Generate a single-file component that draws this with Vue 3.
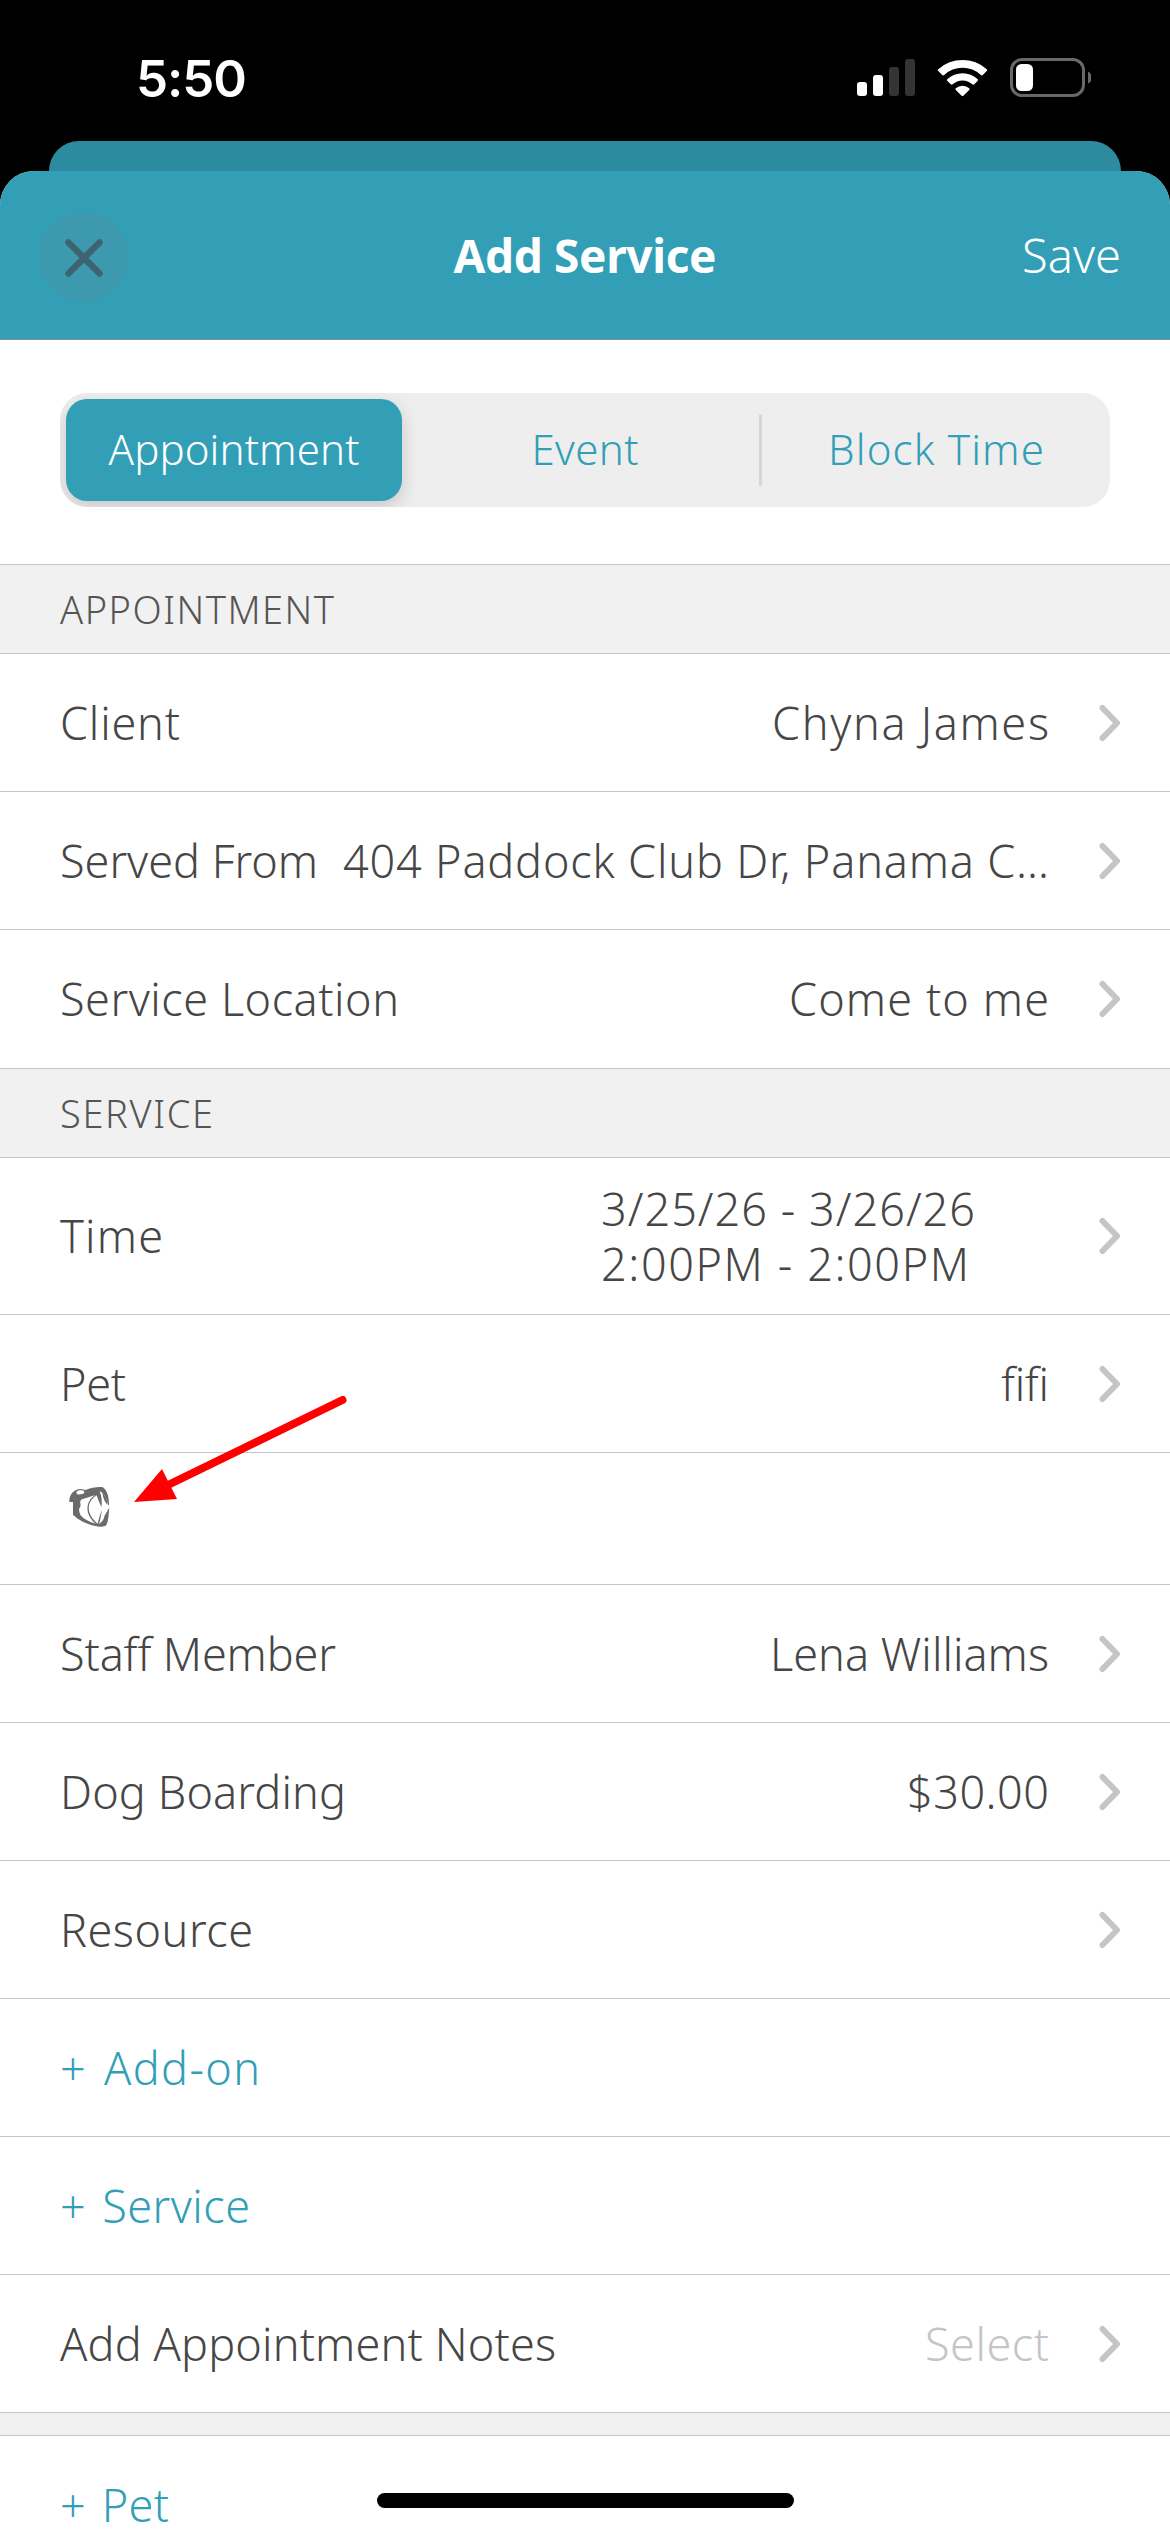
<script setup>
// Spreads the letters of a label so that it takes up the given width.
const vFit = {
  mounted(el, { value }) {
    if (!value) return
    const gaps = Array.from(el.textContent).length - 1
    const spacing = (value - el.getBoundingClientRect().width) / gaps
    el.style.letterSpacing = `${spacing}px`
    el.style.marginRight = `${-spacing}px`
  },
}

const tabs = [
  { text: 'Appointment', w: 251, active: true },
  { text: 'Event', w: 107 },
  { text: 'Block Time', w: 216, divided: true },
]

const sections = [
  {
    title: 'APPOINTMENT',
    w: 274,
    rows: [
      { label: 'Client', lw: 120, value: 'Chyna James', vw: 277 },
      { label: 'Served From', lw: 258, value: '404 Paddock Club Dr, Panama C…', vw: 706 },
      { label: 'Service Location', lw: 339, value: 'Come to me', vw: 260, last: true },
    ],
  },
  {
    title: 'SERVICE',
    w: 153,
    rows: [
      {
        label: 'Time',
        lw: 103,
        lines: [
          { text: '3/25/26 - 3/26/26', w: 374 },
          { text: '2:00PM - 2:00PM', w: 368 },
        ],
      },
      { label: 'Pet', lw: 66, value: 'fifi', vw: 48 },
      { icon: true },
      { label: 'Staff Member', lw: 276, value: 'Lena Williams', vw: 279 },
      { label: 'Dog Boarding', lw: 286, value: '$30.00', vw: 142 },
      { label: 'Resource', lw: 193, value: '' },
      { action: '+ Add-on', lw: 200 },
      { action: '+ Service', lw: 190 },
      { label: 'Add Appointment Notes', lw: 496, value: 'Select', vw: 124, placeholder: true },
    ],
  },
]
</script>

<template>
  <div class="screen">
    <header class="status">
      <span v-fit="111" class="clock">5:50</span>
      <svg class="status-icons" width="240" height="44" viewBox="0 0 240 44">
        <g fill="#fff">
          <rect x="6" y="27" width="10" height="14" rx="3" />
          <rect x="22" y="20" width="10" height="21" rx="3" />
        </g>
        <g fill="#343434">
          <rect x="38" y="12" width="10" height="29" rx="3" />
          <rect x="54" y="4" width="10" height="37" rx="3" />
        </g>
        <g fill="#fff">
          <path d="M87.300 14.300a36 36 0 0 1 48.400 0q.9.900 0 1.800l-3.900 3.900q-1 .9-2 0a26.600 26.600 0 0 0-36.600 0q-1 .9-2 0l-3.900-3.900q-.9-.9 0-1.800z" />
          <path d="M96.200 24.300a22.500 22.500 0 0 1 30.600 0q.7.8 0 1.500l-3.500 3.500q-1 .9-2 0a14.300 14.300 0 0 0-19.600 0q-1 .9-2 0l-3.500-3.500q-.7-.7 0-1.500z" />
          <path d="M104.800 33.300a10 10 0 0 1 13.400 0q.9.8 0 1.700l-5.800 5.700q-.9.9-1.800 0l-5.800-5.700q-.9-.9 0-1.700z" />
        </g>
        <rect x="160.500" y="4.500" width="72" height="36" rx="10.500" fill="none" stroke="#686868" stroke-width="3" />
        <rect x="165" y="9" width="17" height="27" rx="5.500" fill="#fff" />
        <path d="M237 16.500c5 2 5 10 0 12z" fill="#686868" />
      </svg>
    </header>

    <div class="back-sheet"></div>

    <main class="sheet">
      <nav class="navbar">
        <button class="close">
          <svg width="90" height="90" viewBox="0 0 90 90">
            <path d="M29.500 30.500l31 31M60.500 30.500l-31 31" fill="none" stroke="#3d6470" stroke-width="6.500" stroke-linecap="round" />
          </svg>
        </button>
        <h1><span v-fit="263">Add Service</span></h1>
        <div class="save"><span v-fit="99">Save</span></div>
      </nav>

      <div class="tabs-wrap">
        <div class="tabs">
          <div v-for="t in tabs" :key="t.text" class="tab" :class="{ active: t.active, divided: t.divided }">
            <span v-fit="t.w">{{ t.text }}</span>
          </div>
        </div>
      </div>

      <section v-for="s in sections" :key="s.title">
        <h2><span v-fit="s.w">{{ s.title }}</span></h2>
        <div
          v-for="(r, i) in s.rows"
          :key="i"
          class="row"
          :class="{ last: r.last, tall: r.lines, 'icon-row': r.icon }"
        >
          <svg v-if="r.icon" class="dog" width="42" height="42" viewBox="56 318 126 126">
            <path
              fill="#6b6b6b"
              d="M60 366C59 345 72 328 95 327L108 330C124 322 145 320 158 321C172 326 180 350 179 378L180 382C178 408 176 433 169 437C160 441 148 441 138 438C112 433 86 419 71 404V366Z"
            />
            <ellipse cx="93" cy="337" rx="12" ry="6" fill="#fff" transform="rotate(-8 93 337)" />
            <path
              fill="#fff"
              d="M95 359C108 355 122 350 138 345C106 365 107 404 139 431C120 425 104 417 95 407C86 393 88 371 95 359Z"
            />
            <path fill="#fff" d="M142 346C110 366 110 402 145 431C149 415 153 402 158 390C156 403 153 419 149 433C163 423 172 404 176 388L181 386V376L176 374C173 356 164 339 151 334C157 350 159 366 156 382C152 371 147 362 142 346Z" />
            <path fill="#6b6b6b" d="M92 362Q96 373 91 388Q86 373 92 362ZM159 338Q172 350 175 374Q163 365 159 338ZM161 429Q170 414 174 394Q164 404 161 429Z" />
          </svg>
          <span v-else-if="r.action" v-fit="r.lw" class="action">{{ r.action }}</span>
          <template v-else>
            <span v-fit="r.lw" class="label">{{ r.label }}</span>
            <div v-if="r.lines" class="times">
              <div v-for="l in r.lines" :key="l.text"><span v-fit="l.w">{{ l.text }}</span></div>
            </div>
            <div v-else class="value" :class="{ placeholder: r.placeholder }">
              <span v-fit="r.vw">{{ r.value }}</span>
            </div>
            <svg class="chevron" width="22" height="38" viewBox="0 0 22 38">
              <path d="M3.500 4L18 19L3.500 34" fill="none" stroke="#c5c5c7" stroke-width="6" stroke-linecap="round" stroke-linejoin="round" />
            </svg>
          </template>
        </div>
      </section>

      <div class="gap"></div>
      <div class="row"><span v-fit="109" class="action">+ Pet</span></div>
    </main>

    <svg class="arrow" width="220" height="112" viewBox="130 1395 220 112">
      <path d="M342.500 1400L166 1486" stroke="#f00" stroke-width="8" stroke-linecap="round" />
      <path d="M134 1502L162 1469L177 1499Z" fill="#f00" />
    </svg>
    <div class="home-indicator"></div>
  </div>
</template>

<style>
body {
  background: #000;
}
</style>

<style scoped>
.screen {
  position: relative;
  width: 1170px;
  height: 2532px;
  overflow: hidden;
  background: #000;
  color: #464646;
  font-family: 'Noto Sans', 'Open Sans', sans-serif;
  font-size: 45px;
  font-weight: 300;
}
.screen * {
  box-sizing: border-box;
}
.screen span {
  display: inline-block;
  flex: none;
  white-space: nowrap;
}
.status {
  display: flex;
  justify-content: space-between;
  height: 141px;
  padding: 0 79px 0 136px;
}
.clock {
  margin-top: 48px;
  height: 62px;
  color: #fff;
  font: 600 51px/62px Inter, sans-serif;
}
.status-icons {
  margin-top: 55px;
}
.back-sheet {
  height: 66px;
  margin: 0 49px -36px;
  border-radius: 30px 30px 0 0;
  background: #2c8b9f;
}
.sheet {
  position: relative;
  height: 2361px;
  overflow: hidden;
  border-radius: 34px 34px 0 0;
  background: #fff;
}
.navbar {
  display: grid;
  grid-template-columns: 1fr auto 1fr;
  align-items: center;
  height: 169px;
  padding: 3px 49px 0 39px;
  border-bottom: 1px solid #7f9196;
  background: #329fb7;
  color: #fff;
  font-size: 47px;
}
.close {
  width: 90px;
  height: 90px;
  padding: 0;
  border: 0;
  border-radius: 50%;
  background: #3c99ae;
}
.close svg {
  display: block;
}
h1 {
  margin: 0 0 3px;
  padding-left: 10px;
  font-size: 46px;
  font-weight: 700;
}
.save {
  margin-bottom: 3px;
  text-align: right;
}
.tabs-wrap {
  height: 225px;
  padding: 53px 60px 0;
  border-bottom: 1px solid #c6c6c8;
}
.tabs {
  display: grid;
  grid-template-columns: 336px 1fr 348px;
  height: 114px;
  padding: 6px 0 6px 6px;
  border-radius: 27px;
  overflow: hidden;
  background: #eee;
}
.tab {
  position: relative;
  display: flex;
  align-items: center;
  justify-content: center;
  padding-bottom: 3px;
  border-radius: 21px;
  color: #329fb7;
  font-size: 42px;
}
.tab:nth-child(2) {
  padding-left: 6px;
}
.tab.active {
  background: #329fb7;
  box-shadow: 0 6px 18px rgba(0, 0, 0, 0.16);
  color: #fff;
}
.tab.divided::before {
  content: '';
  position: absolute;
  left: -3px;
  top: 15px;
  width: 3px;
  height: 72px;
  border-radius: 2px;
  background: #d6d6d6;
}
h2 {
  display: flex;
  align-items: center;
  height: 89px;
  margin: 0;
  padding: 0 60px 1px;
  border-bottom: 1px solid #c6c6c8;
  background: #f1f1f1;
  color: #555;
  font-size: 38px;
  font-weight: 300;
}
.row {
  display: flex;
  align-items: center;
  height: 138px;
  padding: 0 49px 1px 60px;
  border-bottom: 1px solid #c6c6c8;
}
.row.last {
  height: 139px;
}
.row.tall {
  height: 157px;
}
.row.icon-row {
  align-items: flex-start;
  height: 132px;
  padding: 33px 0 0 68px;
}
.action {
  color: #329fb7;
  word-spacing: 4px;
}
.value {
  flex: 1;
  text-align: right;
}
.placeholder {
  color: #c5c5c7;
}
.times {
  width: 448px;
  margin-left: auto;
  line-height: 55px;
}
.chevron {
  margin: 1px 0 0 50px;
}
.gap {
  height: 23px;
  border-bottom: 1px solid #c6c6c8;
  background: #f1f1f1;
}
.arrow {
  position: absolute;
  left: 130px;
  top: 1395px;
}
.home-indicator {
  position: absolute;
  left: 377px;
  top: 2493px;
  width: 417px;
  height: 15px;
  border-radius: 8px;
  background: #000;
}
</style>
